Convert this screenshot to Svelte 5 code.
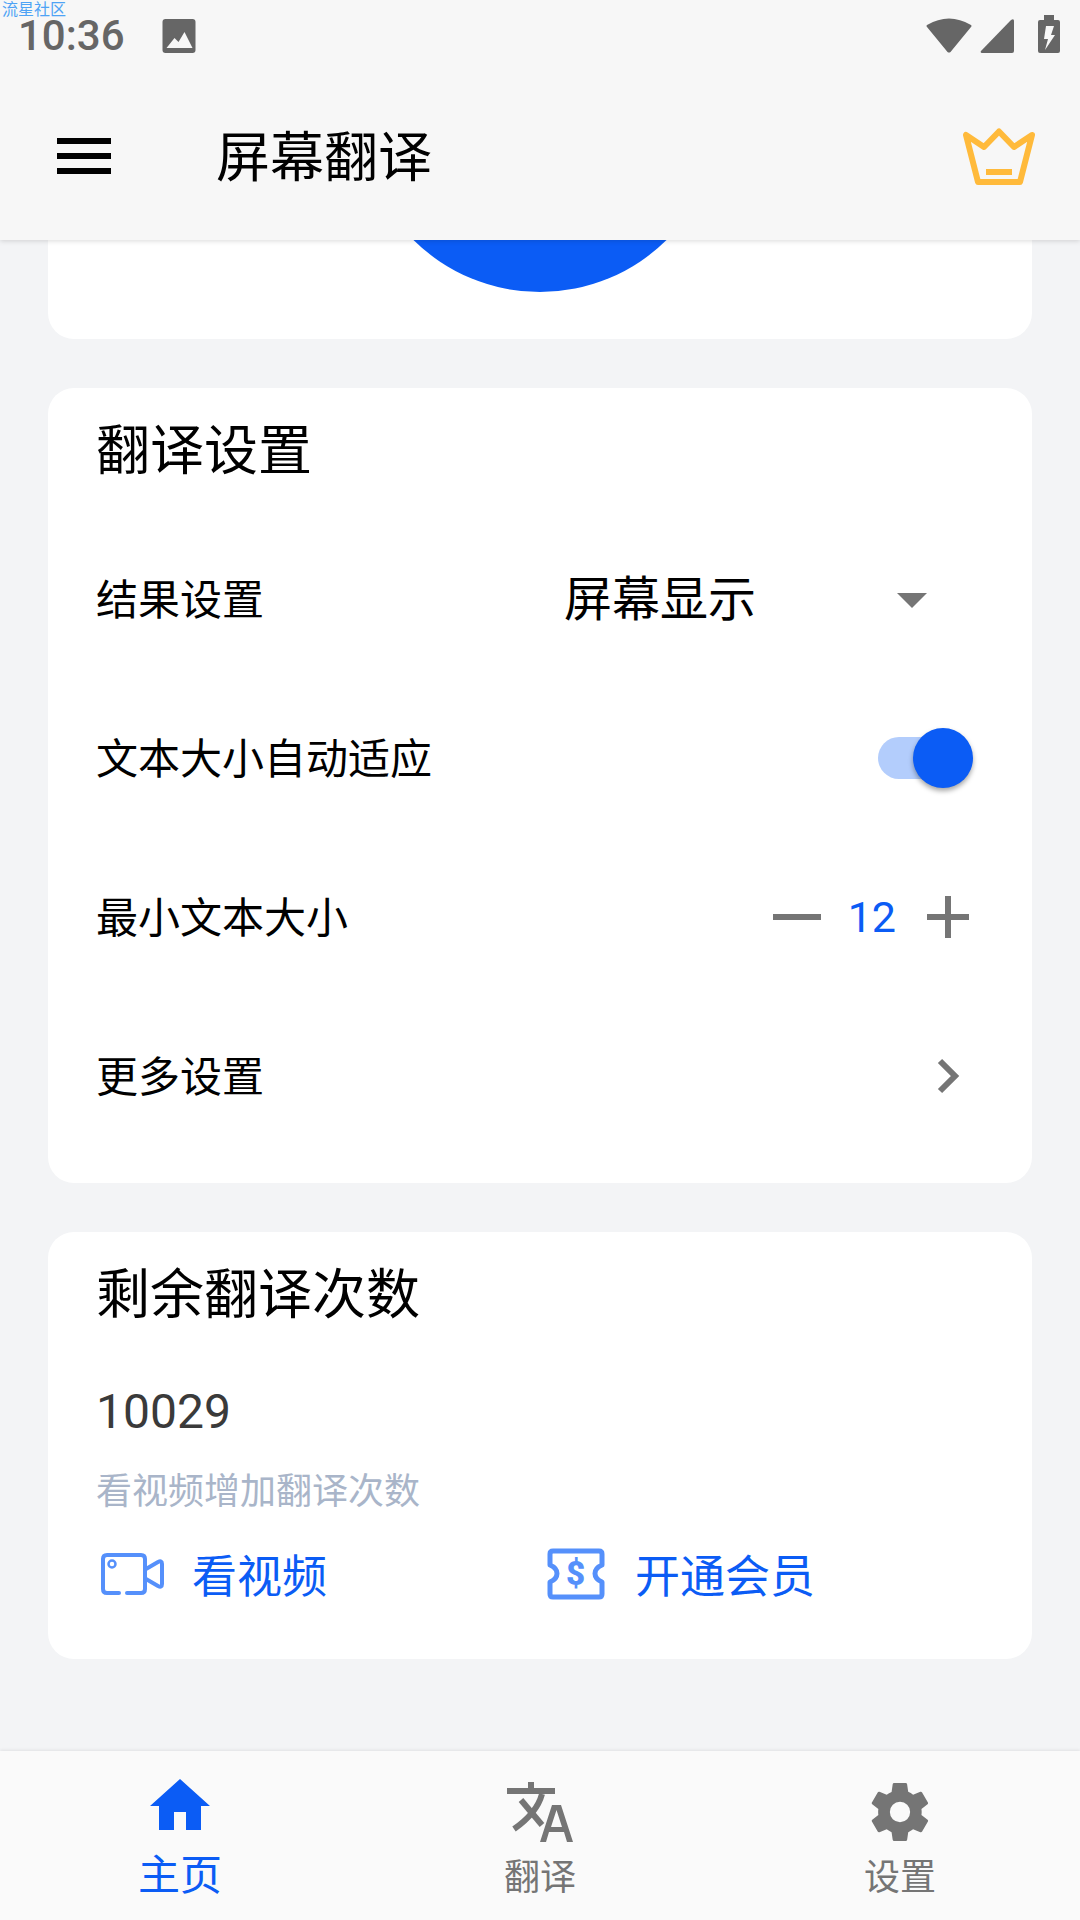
<script>
	const rows = [
		{ label: '结果设置', kind: 'select' },
		{ label: '文本大小自动适应', kind: 'switch' },
		{ label: '最小文本大小', kind: 'stepper' },
		{ label: '更多设置', kind: 'link' }
	];
</script>

<div class="page">
	<header class="top">
		<span class="mark">流星社区</span>
		<div class="status">
			<span class="time">10:36</span>
			<svg class="pic" width="34" height="34" viewBox="0 0 33 34">
				<rect width="33" height="34" rx="3" fill="#666" />
				<path d="M4 29 L12 19 L16 23 L22 13 L30 29 Z" fill="#f7f7f7" />
			</svg>
			<span class="grow"></span>
			<svg width="46" height="36" viewBox="0 0 46 36">
				<path d="M1 8 Q23 -5 45 8 Q46 9 45 10 L24.5 35 Q23 36 21.5 35 L1 10 Q0 9 1 8 Z" fill="#666" />
			</svg>
			<svg class="signal" width="34" height="34" viewBox="0 0 34 34">
				<path d="M1 32 L31 1 Q34 -1 34 2 L34 32 Q34 34 32 34 L2 34 Q0 34 1 32 Z" fill="#666" />
			</svg>
			<svg class="batt" width="22" height="38" viewBox="0 0 22 38">
				<path d="M6 0 H16 V5 H20 Q22 5 22 7 V36 Q22 38 20 38 H2 Q0 38 0 36 V7 Q0 5 2 5 H6 Z" fill="#666" />
				<path d="M8 11 H16 L13 20 H17 L7 35 L10 24 H6 Z" fill="#f7f7f7" />
			</svg>
		</div>
		<div class="bar">
			<div class="burger"><i></i><i></i><i></i></div>
			<h1>屏幕翻译</h1>
			<svg width="72" height="57" viewBox="0 0 72 57">
				<path d="M15 54 H57 L69 7 L51 19 L36 3.5 L21 19 L3 7 Z" fill="none" stroke="#ffba3b" stroke-width="6" stroke-linejoin="round" />
				<rect x="23" y="41" width="26" height="6" fill="#ffba3b" />
			</svg>
		</div>
	</header>

	<main>
		<section class="card stub">
			<div class="circle"></div>
		</section>

		<section class="card settings">
			<h2>翻译设置</h2>
			{#each rows as row}
				<div class="row">
					<span class="label">{row.label}</span>
					{#if row.kind === 'select'}
						<span class="select">屏幕显示</span>
						<span class="caret"></span>
					{:else if row.kind === 'switch'}
						<span class="switch"><span class="knob"></span></span>
					{:else if row.kind === 'stepper'}
						<div class="stepper">
							<span class="minus"></span>
							<span class="value">12</span>
							<span class="plus"></span>
						</div>
					{:else}
						<svg class="chev" width="24" height="36" viewBox="0 0 24 36">
							<path d="M4 3 L19 18 L4 33" fill="none" stroke="#757575" stroke-width="6" />
						</svg>
					{/if}
				</div>
			{/each}
		</section>

		<section class="card quota">
			<h2>剩余翻译次数</h2>
			<div class="count">10029</div>
			<div class="hint">看视频增加翻译次数</div>
			<div class="actions">
				<div class="action first">
					<svg width="64" height="44" viewBox="0 0 64 44">
						<path d="M19 41 H7 Q3 41 3 37 V7 Q3 3 7 3 H41 Q45 3 45 7 V37 Q45 41 41 41 H27" fill="none" stroke="#5590fb" stroke-width="4" stroke-linecap="round" />
						<circle cx="12" cy="12" r="3.5" fill="none" stroke="#5590fb" stroke-width="2.5" />
						<path d="M46 17 L58 10 Q62 8 62 12 V32 Q62 36 58 34 L46 27" fill="none" stroke="#5590fb" stroke-width="4" stroke-linejoin="round" />
					</svg>
					<span>看视频</span>
				</div>
				<div class="action">
					<svg width="58" height="52" viewBox="0 0 58 52">
						<path d="M3 6 Q3 3 6 3 H52 Q55 3 55 6 V17 Q48 20 48 25.5 Q48 31 55 34 V46 Q55 49 52 49 H6 Q3 49 3 46 V34 Q10 31 10 25.5 Q10 20 3 17 Z" fill="none" stroke="#5590fb" stroke-width="5" stroke-linejoin="round" />
						<text x="28.5" y="37" text-anchor="middle" class="dollar">$</text>
					</svg>
					<span>开通会员</span>
				</div>
			</div>
		</section>
	</main>

	<nav>
		<div class="tab on">
			<svg class="home" width="60" height="51" viewBox="0 0 60 51">
				<path d="M30 0 L60 27 H51 V51 H36 V33 H24 V51 H9 V27 H0 Z" fill="#0b5cf5" />
			</svg>
			<span>主页</span>
		</div>
		<div class="tab">
			<svg class="lang" width="66" height="60" viewBox="0 0 66 60">
				<path d="M0 6 H21 V0 H27 V6 H48 V12 H0 Z" fill="#757575" />
				<path d="M35 12 Q30 31 7 47" fill="none" stroke="#757575" stroke-width="6" />
				<path d="M14 18 L35 43" fill="none" stroke="#757575" stroke-width="6" />
				<path d="M33 60 L45 23 H54 L66 60 H60 L57 50 H42 L39 60 Z M44 45 H55 L49.5 28 Z" fill="#757575" fill-rule="evenodd" />
			</svg>
			<span>翻译</span>
		</div>
		<div class="tab">
			<svg class="gear" width="58" height="58" viewBox="2 2 20 20">
				<path d="M19.4 13c.04-.32.07-.66.07-1s-.03-.68-.07-1l2.1-1.65c.19-.15.24-.42.12-.64l-2-3.46c-.12-.22-.39-.3-.61-.22l-2.49 1c-.52-.4-1.08-.73-1.69-.98l-.38-2.65A.49.49 0 0 0 13.97 2h-4a.49.49 0 0 0-.49.42l-.38 2.65c-.61.25-1.17.59-1.69.98l-2.49-1c-.23-.09-.49 0-.61.22l-2 3.46c-.13.22-.07.49.12.64L4.53 11c-.04.32-.07.66-.07 1s.03.68.07 1l-2.1 1.65c-.19.15-.24.42-.12.64l2 3.46c.12.22.39.3.61.22l2.49-1c.52.4 1.08.73 1.69.98l.38 2.65c.03.24.24.42.49.42h4c.25 0 .46-.18.49-.42l.38-2.65c.61-.25 1.17-.59 1.69-.98l2.49 1c.23.09.49 0 .61-.22l2-3.46c.12-.22.07-.49-.12-.64L19.4 13zM12 15.5a3.5 3.5 0 1 1 0-7 3.5 3.5 0 0 1 0 7z" fill="#757575" />
			</svg>
			<span>设置</span>
		</div>
	</nav>
</div>

<style>
	:global(body) {
		margin: 0;
		background: #f3f4f6;
	}
	.page {
		width: 1080px;
		height: 1920px;
		display: flex;
		flex-direction: column;
		overflow: hidden;
		font-family: 'Noto Sans CJK SC', Roboto, sans-serif;
		color: #000;
		background: #f3f4f6;
	}
	.top {
		position: relative;
		height: 240px;
		flex: none;
		background: #f7f7f7;
		box-shadow: 0 1px 5px rgba(0, 0, 0, 0.15);
		z-index: 2;
	}
	.mark {
		position: absolute;
		left: 2px;
		top: 0;
		font-size: 16px;
		line-height: 16px;
		color: #4ea3f5;
	}
	.status {
		height: 72px;
		box-sizing: border-box;
		padding: 0 20px 19px 18px;
		display: flex;
		align-items: flex-end;
	}
	.time {
		font-family: Roboto, sans-serif;
		font-size: 42px;
		font-weight: 500;
		line-height: 34px;
		height: 34px;
		color: #666;
	}
	.pic {
		margin-left: 37px;
	}
	.grow {
		flex: 1;
	}
	.signal {
		margin-left: 8px;
	}
	.batt {
		margin-left: 24px;
	}
	.bar {
		height: 168px;
		display: flex;
		align-items: center;
		padding: 0 45px 0 57px;
	}
	.burger {
		width: 54px;
		display: flex;
		flex-direction: column;
		gap: 9px;
	}
	.burger i {
		display: block;
		height: 6px;
		background: #000;
	}
	h1 {
		margin: -4px 0 0 105px;
		font-size: 54px;
		font-weight: 400;
		flex: 1;
		line-height: 1;
	}
	main {
		flex: 1;
		min-height: 0;
		padding: 0 48px;
		overflow: hidden;
	}
	.card {
		background: #fff;
		border-radius: 26px;
		margin-bottom: 49px;
	}
	.stub {
		height: 99px;
		border-radius: 0 0 26px 26px;
		overflow: hidden;
		display: flex;
		justify-content: center;
		align-items: flex-end;
	}
	.circle {
		flex: none;
		width: 360px;
		height: 360px;
		border-radius: 50%;
		background: #0b5cf5;
		margin-bottom: 47px;
	}
	.settings {
		height: 795px;
		padding: 0 49px 0 48px;
	}
	h2 {
		margin: 0;
		font-size: 54px;
		font-weight: 400;
		line-height: 62px;
		padding-top: 28px;
	}
	.settings h2 {
		margin-bottom: 39px;
	}
	.row {
		height: 159px;
		display: flex;
		align-items: center;
		font-size: 42px;
	}
	.label {
		flex: 1;
	}
	.select {
		width: 333px;
		font-size: 48px;
		margin-top: -4px;
	}
	.caret {
		width: 0;
		height: 0;
		border: 15px solid transparent;
		border-top: 15px solid #757575;
		border-bottom: 0;
		margin: 7px 56px 0 0;
	}
	.switch {
		position: relative;
		width: 80px;
		height: 42px;
		border-radius: 21px;
		background: #b3cdfc;
		margin: 5px 25px 0 0;
	}
	.knob {
		position: absolute;
		right: -15px;
		top: -9px;
		width: 60px;
		height: 60px;
		border-radius: 50%;
		background: #0b5cf5;
		box-shadow: 0 3px 5px rgba(0, 0, 0, 0.35);
	}
	.stepper {
		display: flex;
		align-items: center;
		margin: 5px 14px 0 0;
	}
	.minus {
		width: 48px;
		height: 6px;
		background: #757575;
	}
	.value {
		font-family: Roboto, sans-serif;
		font-size: 43px;
		color: #0b5cf5;
		margin: 0 31px 0 27px;
	}
	.plus {
		width: 42px;
		height: 42px;
		background:
			linear-gradient(#757575, #757575) center / 100% 6px no-repeat,
			linear-gradient(#757575, #757575) center / 6px 100% no-repeat;
	}
	.chev {
		margin: 5px 23px 0 0;
	}
	.quota {
		height: 427px;
		padding: 0 49px 0 48px;
	}
	.count {
		font-family: Roboto, sans-serif;
		font-size: 48px;
		color: #3a3a3a;
		margin-top: 62px;
		line-height: 56px;
	}
	.hint {
		font-size: 36px;
		line-height: 44px;
		color: #a9b5c9;
		margin-top: 26px;
	}
	.actions {
		display: flex;
		align-items: center;
		margin-top: 31px;
		font-size: 45px;
		color: #0b5cf5;
	}
	.action {
		display: flex;
		align-items: center;
		gap: 30px;
	}
	.action.first {
		width: 451px;
		padding-left: 4px;
		box-sizing: border-box;
		gap: 28px;
	}
	.dollar {
		font-family: Roboto, sans-serif;
		font-size: 33px;
		font-weight: 900;
		fill: #5590fb;
	}
	nav {
		height: 169px;
		flex: none;
		box-sizing: border-box;
		padding-top: 28px;
		background: #fafafa;
		box-shadow: 0 -1px 3px rgba(0, 0, 0, 0.08);
		display: grid;
		grid-template-columns: repeat(3, 360px);
		z-index: 2;
	}
	.tab {
		display: flex;
		flex-direction: column;
		align-items: center;
		font-size: 36px;
		line-height: 42px;
		color: #757575;
	}
	.home {
		margin-bottom: 21px;
	}
	.lang {
		margin: 3px 0 11px;
	}
	.gear {
		margin: 4px 0 12px;
	}
	.tab.on {
		color: #0b5cf5;
		font-size: 42px;
	}
</style>
